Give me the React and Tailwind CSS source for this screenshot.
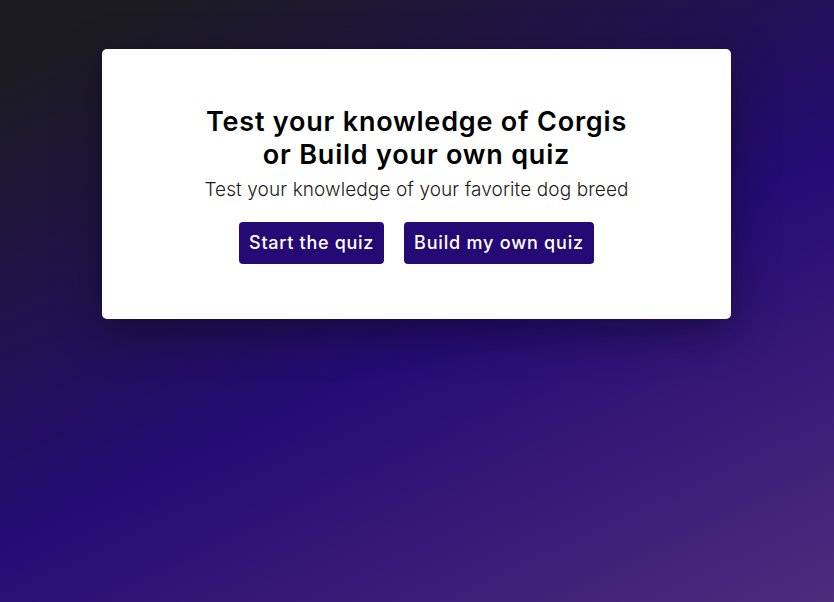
export default function App() {
    return (
        <div className="min-h-[602px] w-full bg-[linear-gradient(155deg,#1c1b23_8%,#250b73_55%,#4d2c7c_100%)] px-[102px] pt-[49px] font-['Inter',sans-serif]">
            {/* Welcome card */}
            <div className="flex h-[270px] w-[629px] flex-col items-center justify-center rounded-[5px] bg-white shadow-[0_12px_45px_rgba(0,0,0,0.4)]">
                <h1 className="text-center text-[27px] font-semibold leading-[33px] tracking-[0.8px] text-black">
                    Test your knowledge of Corgis
                    <br />
                    or Build your own quiz
                </h1>
                <p className="mt-[4px] text-[19px] font-light leading-[30px] tracking-[0.1px] text-[#1b1b1b]">
                    Test your knowledge of your favorite dog breed
                </p>
                <div className="mt-[17px] flex gap-5">
                    <button className="h-[42px] rounded-[4px] bg-[#250a75] px-[10px] text-[18px] font-medium tracking-[0.7px] text-white">
                        Start the quiz
                    </button>
                    <button className="h-[42px] rounded-[4px] bg-[#250a75] px-[10px] text-[18px] font-medium tracking-[0.8px] text-white">
                        Build my own quiz
                    </button>
                </div>
            </div>
        </div>
    );
}
